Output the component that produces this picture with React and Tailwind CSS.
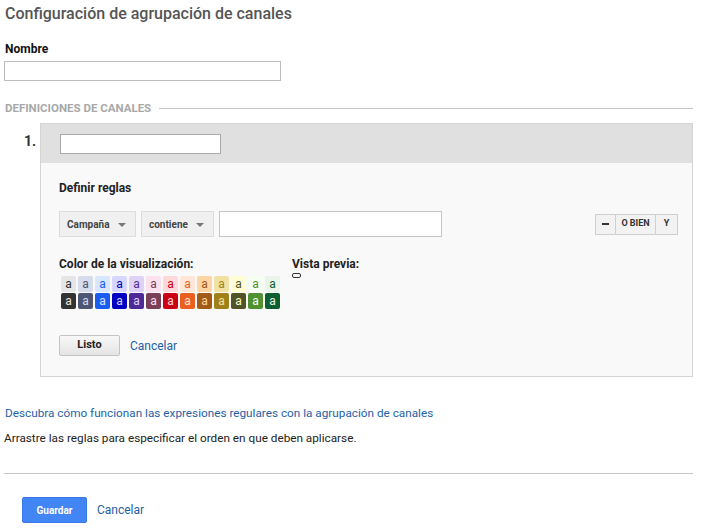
const swatches = [
  ['bg-[#e6e6e6] text-[#333333]', 'bg-[#333333] text-[#e6e6e6]'],
  ['bg-[#d6dceb] text-[#4d5673]', 'bg-[#4d5673] text-[#d6dceb]'],
  ['bg-[#d9e6ff] text-[#1a5cf0]', 'bg-[#1a5cf0] text-[#d9e6ff]'],
  ['bg-[#d6d6ff] text-[#0000c2]', 'bg-[#0000c2] text-[#d6d6ff]'],
  ['bg-[#dfd2f7] text-[#4e2a99]', 'bg-[#4e2a99] text-[#dfd2f7]'],
  ['bg-[#fde1ee] text-[#7a4058]', 'bg-[#7a4058] text-[#fde1ee]'],
  ['bg-[#ffd9da] text-[#cc0013]', 'bg-[#cc0013] text-[#ffd9da]'],
  ['bg-[#ffe6d6] text-[#eb6020]', 'bg-[#eb6020] text-[#ffe6d6]'],
  ['bg-[#fdd4a4] text-[#a45a17]', 'bg-[#a45a17] text-[#fdd4a4]'],
  ['bg-[#f1e1a3] text-[#a08119]', 'bg-[#a08119] text-[#f1e1a3]'],
  ['bg-[#fffed3] text-[#525326]', 'bg-[#525326] text-[#fffed3]'],
  ['bg-[#f6fdf1] text-[#4f922f]', 'bg-[#4f922f] text-[#f6fdf1]'],
  ['bg-[#e9f4ea] text-[#0e5f2f]', 'bg-[#0e5f2f] text-[#e9f4ea]'],
];

const Caret = () => (
  <span className="ml-auto inline-block w-0 h-0 border-l-[4px] border-r-[4px] border-t-[4px] border-l-transparent border-r-transparent border-t-[#777] mt-[2px]" />
);

const App = () => {
  return (
    <div className="w-[704px] h-[528px] bg-white font-['Roboto',sans-serif] text-[#222] overflow-hidden">
      <h1 className="pl-[5px] pt-[4px] text-[16px] leading-[20px] font-medium text-[#555]">
        Configuración de agrupación de canales
      </h1>

      <div className="mt-[18px] pl-[5px] text-[12px] leading-[14px] font-bold text-[#111]">Nombre</div>
      <input className="block mt-[5px] ml-[4px] w-[277px] h-[20px] border border-[#bdbdbd] bg-white" />

      <div className="mt-[21px] ml-[5px] mr-[11px] flex items-center gap-[8px]">
        <span className="text-[11.5px] leading-[12px] font-bold text-[#a8a8a8]">
          DEFINICIONES DE CANALES
        </span>
        <div className="flex-1 h-px bg-[#c6c6c6]" />
      </div>

      <div className="mt-[9px] flex">
        <div className="w-[40px] pt-[10px] pr-[4px] text-right text-[14px] leading-[16px] font-bold text-[#333]">1.</div>
        <div className="w-[653px] border border-[#d4d4d4] bg-[#f9f9f9]">
          <div className="h-[39px] bg-[#e0e0e0] flex items-center pl-[19px]">
            <input className="w-[161px] h-[20px] border border-[#a9a9a9] bg-white" />
          </div>
          <div className="pl-[18px] pr-[18px] pt-[18px] pb-[20px]">
            <div className="text-[12px] leading-[14px] font-bold text-[#222]">Definir reglas</div>

            <div className="mt-[16px] flex items-center">
              <div className="w-[77px] h-[26px] border border-[#dcdcdc] bg-[#f0f0f0] flex items-center pl-[7px] pr-[9px] text-[10px] font-bold text-[#444]">
                Campaña
                <Caret />
              </div>
              <div className="ml-[5px] w-[73px] h-[26px] border border-[#dcdcdc] bg-[#f0f0f0] flex items-center pl-[7px] pr-[9px] text-[10px] font-bold text-[#444]">
                contiene
                <Caret />
              </div>
              <input className="ml-[5px] w-[223px] h-[26px] border border-[#c6c6c6] bg-white" />
              <div className="ml-auto -mr-[4px] flex h-[21px] border border-[#cfcfcf] bg-[#f2f2f2] text-[9px] font-bold text-[#333]">
                <div className="w-[20px] flex items-center justify-center border-r border-[#cfcfcf]">
                  <span className="block w-[7px] h-[2px] bg-[#333]" />
                </div>
                <div className="w-[40px] flex items-center justify-center border-r border-[#cfcfcf]">O BIEN</div>
                <div className="w-[21px] flex items-center justify-center">Y</div>
              </div>
            </div>

            <div className="mt-[21px] flex">
              <div>
                <div className="text-[12px] leading-[13px] font-bold text-[#222]">Color de la visualización:</div>
                <div className="mt-[5px] ml-[2px] grid grid-cols-[repeat(13,15px)] grid-rows-[16px_16px] grid-flow-col gap-x-[2px] gap-y-[1px]">
                  {swatches.map((pair, i) =>
                    pair.map((cls, j) => (
                      <div
                        key={`${i}-${j}`}
                        className={`${cls} rounded-[2px] flex items-center justify-center text-[12px] leading-none pb-[1px]`}
                      >
                        a
                      </div>
                    ))
                  )}
                </div>
              </div>
              <div className="ml-[12px]">
                <div className="text-[12px] leading-[13px] font-bold text-[#222]">Vista previa:</div>
                <div className="mt-[2px] w-[9px] h-[5px] border border-[#333] rounded-[2px]" />
              </div>
            </div>

            <div className="mt-[26px] flex items-center">
              <button className="w-[61px] h-[21px] border border-[#c4c4c4] rounded-[2px] bg-gradient-to-b from-[#f8f8f8] to-[#e4e4e4] text-[11px] font-bold text-[#222]">
                Listo
              </button>
              <span className="ml-[10px] text-[12px] text-[#1f5fa6]">Cancelar</span>
            </div>
          </div>
        </div>
      </div>

      <div className="mt-[29px] pl-[5px] text-[11.75px] leading-[14px] text-[#1f5fa6]">
        Descubra cómo funcionan las expresiones regulares con la agrupación de canales
      </div>
      <div className="mt-[11px] pl-[4px] text-[11.75px] leading-[14px] text-[#222]">
        Arrastre las reglas para especificar el orden en que deben aplicarse.
      </div>

      <div className="mt-[28px] ml-[4px] mr-[11px] h-px bg-[#c6c6c6]" />

      <div className="mt-[23px] ml-[22px] flex items-center">
        <button className="w-[65px] h-[26px] rounded-[2px] bg-[#4285f4] border border-[#3b78e7] text-white text-[10px] font-bold">
          Guardar
        </button>
        <span className="ml-[10px] text-[12px] text-[#1f5fa6]">Cancelar</span>
      </div>
    </div>
  );
};

export default App;
